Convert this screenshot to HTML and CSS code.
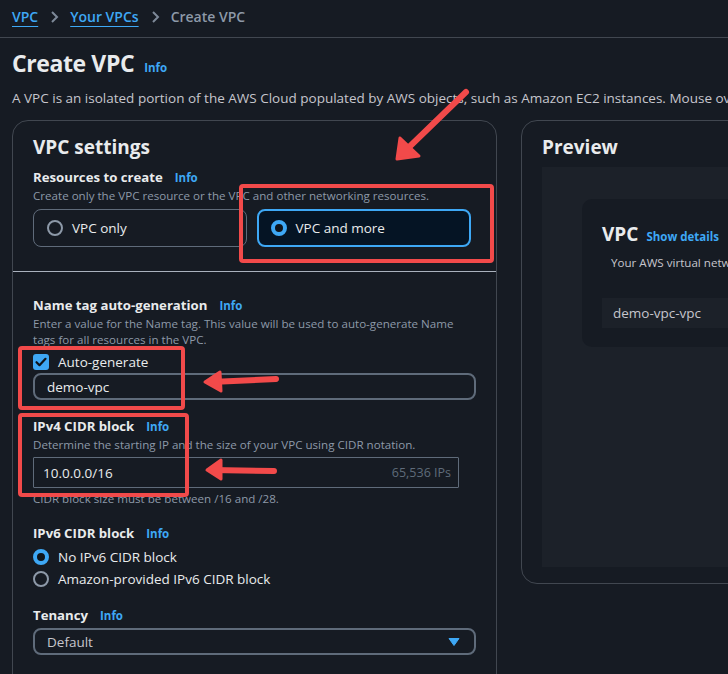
FILE: index.html
```html
<!DOCTYPE html>
<html lang="en">
<head>
<meta charset="utf-8">
<title>Create VPC</title>
<link rel="stylesheet" href="styles.css">
</head>
<body>
<nav class="crumbs">
  <a class="crumb-link" href="#">VPC</a>
  <svg class="chev" viewBox="0 0 16 16" width="16" height="16"><path d="M6 3l5 5-5 5" fill="none" stroke="#7d8998" stroke-width="2"/></svg>
  <a class="crumb-link" href="#">Your VPCs</a>
  <svg class="chev" viewBox="0 0 16 16" width="16" height="16"><path d="M6 3l5 5-5 5" fill="none" stroke="#7d8998" stroke-width="2"/></svg>
  <span class="crumb-current">Create VPC</span>
</nav>

<main class="page">
  <header class="title-row">
    <h1 class="title">Create VPC</h1>
    <a class="info" href="#">Info</a>
  </header>
  <p class="lead">A VPC is an isolated portion of the AWS Cloud populated by AWS objects, such as Amazon EC2 instances. Mouse over the diagram to see details.</p>

  <div class="columns">
    <section class="panel settings">
      <div class="panel-top">
        <h2 class="panel-title">VPC settings</h2>
        <div class="label-row"><span class="label">Resources to create</span><a class="info" href="#">Info</a></div>
        <p class="hint">Create only the VPC resource or the VPC and other networking resources.</p>
        <div class="tiles">
          <div class="tile">
            <span class="radio"></span><span class="tile-text">VPC only</span>
          </div>
          <div class="tile tile-on">
            <span class="radio radio-on"></span><span class="tile-text">VPC and more</span>
          </div>
        </div>
      </div>
      <div class="panel-body">
        <div class="field first">
          <div class="label-row"><span class="label">Name tag auto-generation</span><a class="info" href="#">Info</a></div>
          <p class="hint">Enter a value for the Name tag. This value will be used to auto-generate Name tags for all resources in the VPC.</p>
          <div class="check-row">
            <span class="checkbox"><svg viewBox="0 0 16 16" width="16" height="16"><path d="M3.5 8.2l3 3 6-6.4" fill="none" stroke="#0f141a" stroke-width="2.2" stroke-linecap="round" stroke-linejoin="round"/></svg></span>
            <span class="opt-text">Auto-generate</span>
          </div>
          <div class="input round">demo-vpc</div>
        </div>

        <div class="field">
          <div class="label-row"><span class="label">IPv4 CIDR block</span><a class="info" href="#">Info</a></div>
          <p class="hint">Determine the starting IP and the size of your VPC using CIDR notation.</p>
          <div class="input square cidr"><span>10.0.0.0/16</span><span class="ips">65,536 IPs</span></div>
          <p class="hint constraint">CIDR block size must be between /16 and /28.</p>
        </div>

        <div class="field ipv6">
          <div class="label-row"><span class="label">IPv6 CIDR block</span><a class="info" href="#">Info</a></div>
          <div class="radio-row first-opt"><span class="radio radio-on small"></span><span class="opt-text">No IPv6 CIDR block</span></div>
          <div class="radio-row"><span class="radio small"></span><span class="opt-text">Amazon-provided IPv6 CIDR block</span></div>
        </div>

        <div class="field">
          <div class="label-row"><span class="label">Tenancy</span><a class="info" href="#">Info</a></div>
          <div class="input round select"><span>Default</span>
            <svg class="caret" viewBox="0 0 12 10" width="12" height="10"><path d="M1 1.5h10L6 8.5z" fill="#3ea8f5" stroke="#3ea8f5" stroke-width="1" stroke-linejoin="round"/></svg>
          </div>
        </div>
      </div>
    </section>

    <section class="panel preview">
      <h2 class="panel-title">Preview</h2>
      <div class="preview-area">
        <div class="vpc-card">
          <div class="vpc-head"><span class="vpc-title">VPC</span><a class="info show" href="#">Show details</a></div>
          <p class="vpc-sub">Your AWS virtual network</p>
          <div class="vpc-name">demo-vpc-vpc</div>
        </div>
      </div>
    </section>
  </div>
</main>

<svg class="annot" viewBox="0 0 728 674" width="728" height="674" aria-hidden="true">
  <g fill="none" stroke="#f24a4a" stroke-width="4">
    <rect x="241" y="186" width="251" height="75" rx="2"/>
    <rect x="20" y="348" width="163" height="60" rx="2"/>
    <rect x="20" y="415" width="167" height="80" rx="2"/>
  </g>
  <g fill="none" stroke="#f24a4a" stroke-width="6" stroke-linecap="round" stroke-linejoin="round">
    <path d="M466 92L404 152"/>
    <path d="M276 379L211 382"/>
    <path d="M274 471L212 470"/>
  </g>
  <g fill="#f24a4a" stroke="#f24a4a" stroke-width="3" stroke-linejoin="round">
    <path d="M397 159L400 138L419 156Z"/>
    <path d="M205 382L220 372L221 391Z"/>
    <path d="M207 470L221 460L221 479Z"/>
  </g>
</svg>
</body>
</html>
```

FILE: styles.css
```css
* { box-sizing: border-box; }
html, body { margin: 0; padding: 0; }
body {
  width: 728px;
  height: 674px;
  overflow: hidden;
  background: #161b23;
  color: #e9ebed;
  font-family: "Open Sans", "Noto Sans", sans-serif;
  font-size: 14px;
  position: relative;
}
a { text-decoration: none; }
p { margin: 0; }
h1, h2 { margin: 0; }

.crumbs {
  height: 38px;
  border-bottom: 1px solid #414750;
  display: flex;
  align-items: center;
  gap: 8px;
  padding: 0 12px 4px;
  font-size: 14px;
  font-weight: 600;
}
.crumb-link {
  color: #3ea8f5;
  text-decoration: underline;
  text-underline-offset: 4px;
  text-decoration-thickness: 1px;
}
.crumb-current { color: #8d99a8; }
.chev { display: block; }

.page { padding: 0 12px; }
.title-row {
  display: flex;
  align-items: baseline;
  gap: 10px;
  margin-top: 9px;
  height: 32px;
}
.title {
  font-size: 23px;
  font-weight: 700;
  line-height: 32px;
  color: #e9ebed;
  letter-spacing: -0.4px;
}
.info {
  color: #3ea8f5;
  font-size: 11.5px;
  font-weight: 700;
}
.lead {
  margin-top: 10px;
  line-height: 18px;
  color: #c6c6cd;
  white-space: nowrap;
  font-size: 13.5px;
}

.columns {
  display: flex;
  gap: 24px;
  margin-top: 13px;
  align-items: flex-start;
}
.panel {
  border: 1px solid #414750;
  border-radius: 16px;
  flex: none;
}
.settings {
  width: 485px;
  height: 640px;
}
.panel-top {
  padding: 12px 20px 24px;
  border-bottom: 1px solid #aab2bd;
}
.panel-title {
  font-size: 19px;
  font-weight: 700;
  line-height: 28px;
  color: #e9ebed;
}
.label-row {
  display: flex;
  align-items: baseline;
  gap: 12px;
  line-height: 20px;
}
.panel-top .label-row { margin-top: 6px; }
.label {
  font-weight: 700;
  font-size: 13.2px;
  color: #e9ebed;
}
.hint {
  font-size: 11.6px;
  line-height: 16px;
  color: #8d99a8;
}
.tiles {
  display: flex;
  gap: 10px;
  margin-top: 5px;
  width: 438px;
}
.tile {
  flex: 1;
  height: 38px;
  border: 1px solid #5f6b7a;
  border-radius: 8px;
  display: flex;
  align-items: center;
  gap: 9px;
  padding-left: 13px;
}
.tile-on {
  border: 2px solid #3ea8f5;
  background: #051424;
  padding-left: 12px;
}
.tile-text { font-size: 13.5px; color: #e9ebed; }

.radio {
  width: 16px;
  height: 16px;
  border-radius: 50%;
  border: 2px solid #8d99a8;
  flex: none;
}
.radio-on {
  border: 4px solid #3ea8f5;
  background: #0f141a;
}

.panel-body { padding: 0 20px; }
.field { margin-top: 16px; }
.field.first { margin-top: 23px; }
.field.ipv6 { margin-top: 16px; }

.check-row {
  display: flex;
  align-items: center;
  gap: 9px;
  height: 20px;
  margin-top: 4px;
}
.checkbox {
  width: 16px;
  height: 16px;
  border-radius: 3px;
  background: #3ea8f5;
  display: block;
}
.checkbox svg { display: block; }
.opt-text { font-size: 13.5px; color: #e9ebed; }

.input {
  display: flex;
  align-items: center;
  color: #e9ebed;
  font-size: 13.5px;
}
.round {
  height: 27px;
  border: 2px solid #5f6b7a;
  border-radius: 8px;
  padding: 0 12px;
  margin-top: 1px;
}
.square {
  height: 31px;
  width: 426px;
  border: 1px solid #5f6b7a;
  border-radius: 1px;
  padding: 0 7px 0 9px;
  margin-top: 4px;
  justify-content: space-between;
}
.ips { color: #5f6b7a; font-size: 12.5px; }
.constraint { margin-top: 3px; }

.radio-row {
  display: flex;
  align-items: center;
  gap: 9px;
  height: 20px;
  margin-top: 2px;
}
.radio-row.first-opt { margin-top: 3px; }

.select {
  margin-top: 2px;
  justify-content: space-between;
  padding-right: 14px;
  color: #c6c6cd;
}
.caret { display: block; }

.preview {
  width: 420px;
  height: 464px;
  padding: 12px 0 16px 20px;
}
.preview-area {
  margin-top: 6px;
  height: 400px;
  background: #1c2129;
  padding: 32px 0 0 40px;
}
.vpc-card {
  height: 148px;
  background: #161b23;
  border-radius: 10px;
  padding: 22px 0 0 20px;
}
.vpc-head {
  display: flex;
  align-items: baseline;
  gap: 8px;
  line-height: 26px;
}
.vpc-title { font-size: 19px; font-weight: 700; color: #e9ebed; }
.show { font-size: 11.5px; }
.vpc-sub {
  margin: 5px 0 0 9px;
  font-size: 11.6px;
  line-height: 16px;
  color: #c6c6cd;
  white-space: nowrap;
}
.vpc-name {
  margin-top: 27px;
  height: 30px;
  background: #1c2129;
  display: flex;
  align-items: center;
  padding-left: 11px;
  font-size: 13.5px;
  color: #c6c6cd;
}

.annot {
  position: absolute;
  left: 0;
  top: 0;
  pointer-events: none;
}
```
